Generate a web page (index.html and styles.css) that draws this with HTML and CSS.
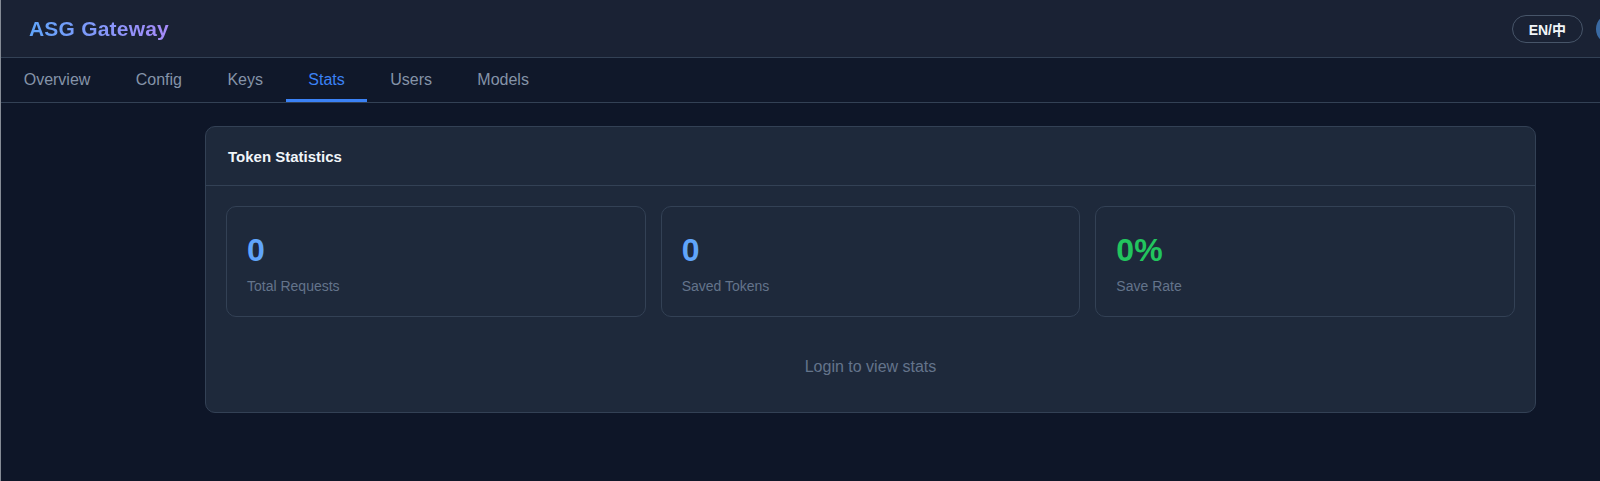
FILE: index.html
```html
<!DOCTYPE html>
<html lang="en">
<head>
    <meta charset="UTF-8">
    <meta name="viewport" content="width=device-width, initial-scale=1.0">
    <title>ASG Gateway</title>
    <link rel="stylesheet" href="styles.css">
</head>
<body>
    <header class="topbar">
        <div class="brand">ASG Gateway</div>
        <div class="topbar-right">
            <button type="button" class="lang-btn">EN/中</button>
            <span class="avatar"></span>
        </div>
    </header>

    <nav class="tabs">
        <a class="tab">Overview</a>
        <a class="tab">Config</a>
        <a class="tab">Keys</a>
        <a class="tab active">Stats</a>
        <a class="tab">Users</a>
        <a class="tab">Models</a>
    </nav>

    <main class="content">
        <section class="card">
            <div class="card-header">Token Statistics</div>
            <div class="card-body">
                <div class="stat-grid">
                    <div class="stat-box">
                        <div class="stat-value">0</div>
                        <div class="stat-label">Total Requests</div>
                    </div>
                    <div class="stat-box">
                        <div class="stat-value">0</div>
                        <div class="stat-label">Saved Tokens</div>
                    </div>
                    <div class="stat-box">
                        <div class="stat-value green">0%</div>
                        <div class="stat-label">Save Rate</div>
                    </div>
                </div>
                <div class="empty">Login to view stats</div>
            </div>
        </section>
    </main>
</body>
</html>
```

FILE: styles.css
```css
body {
    font-family: "Liberation Sans", "Noto Sans CJK SC", sans-serif;
    margin: 0;
    padding: 0;
    height: 481px;
    overflow: hidden;
    background: #0e1628;
    border-left: 1px solid #858b95;
    color: #e2e8f0;
}

.topbar {
    height: 57px;
    display: flex;
    align-items: center;
    justify-content: space-between;
    padding: 0 0 0 28px;
    background: #1a2234;
    border-bottom: 1px solid #334155;
}

.brand {
    font-size: 21px;
    font-weight: bold;
    letter-spacing: 0.2px;
    background: linear-gradient(90deg, #60a5fa, #a78bfa);
    -webkit-background-clip: text;
    background-clip: text;
    color: transparent;
}

.topbar-right {
    display: flex;
    align-items: center;
    gap: 13px;
    margin-right: -26px;
}

.lang-btn {
    height: 28px;
    padding: 0 16px;
    border: 1px solid #475569;
    border-radius: 14px;
    background: transparent;
    color: #f1f5f9;
    font-family: "Liberation Sans", "Noto Sans CJK SC", sans-serif;
    font-size: 14px;
    font-weight: bold;
}

.avatar {
    width: 30px;
    height: 30px;
    border-radius: 50%;
    background: #3a6aa3;
}

.tabs {
    display: flex;
    background: #10182a;
    border-bottom: 1px solid #334155;
}

.tab {
    padding: 12px 22.7px 10px;
    font-size: 16px;
    line-height: 19px;
    color: #8593a8;
    border-bottom: 3px solid transparent;
    cursor: pointer;
}

.tab.active {
    color: #3b82f6;
    border-bottom-color: #3b82f6;
}

.content {
    padding: 23px 64px 0 204px;
}

.card {
    background: #1e293b;
    border: 1px solid #334155;
    border-radius: 10px;
}

.card-header {
    height: 58px;
    display: flex;
    align-items: center;
    padding: 0 22px;
    font-size: 15px;
    font-weight: bold;
    color: #f1f5f9;
    border-bottom: 1px solid #334155;
}

.card-body {
    padding: 20px;
}

.stat-grid {
    display: grid;
    grid-template-columns: repeat(3, 1fr);
    gap: 15px;
}

.stat-box {
    height: 111px;
    box-sizing: border-box;
    padding: 24px 20px 0;
    border: 1px solid #334155;
    border-radius: 10px;
    background: #1e293b;
}

.stat-value {
    font-size: 32px;
    font-weight: bold;
    line-height: 38px;
    color: #60a5fa;
}

.stat-value.green {
    color: #22c55e;
}

.stat-label {
    margin-top: 7px;
    font-size: 14px;
    line-height: 20px;
    color: #64748b;
}

.empty {
    padding: 38px 0 13px;
    text-align: center;
    font-size: 16px;
    line-height: 24px;
    color: #64748b;
}
```
